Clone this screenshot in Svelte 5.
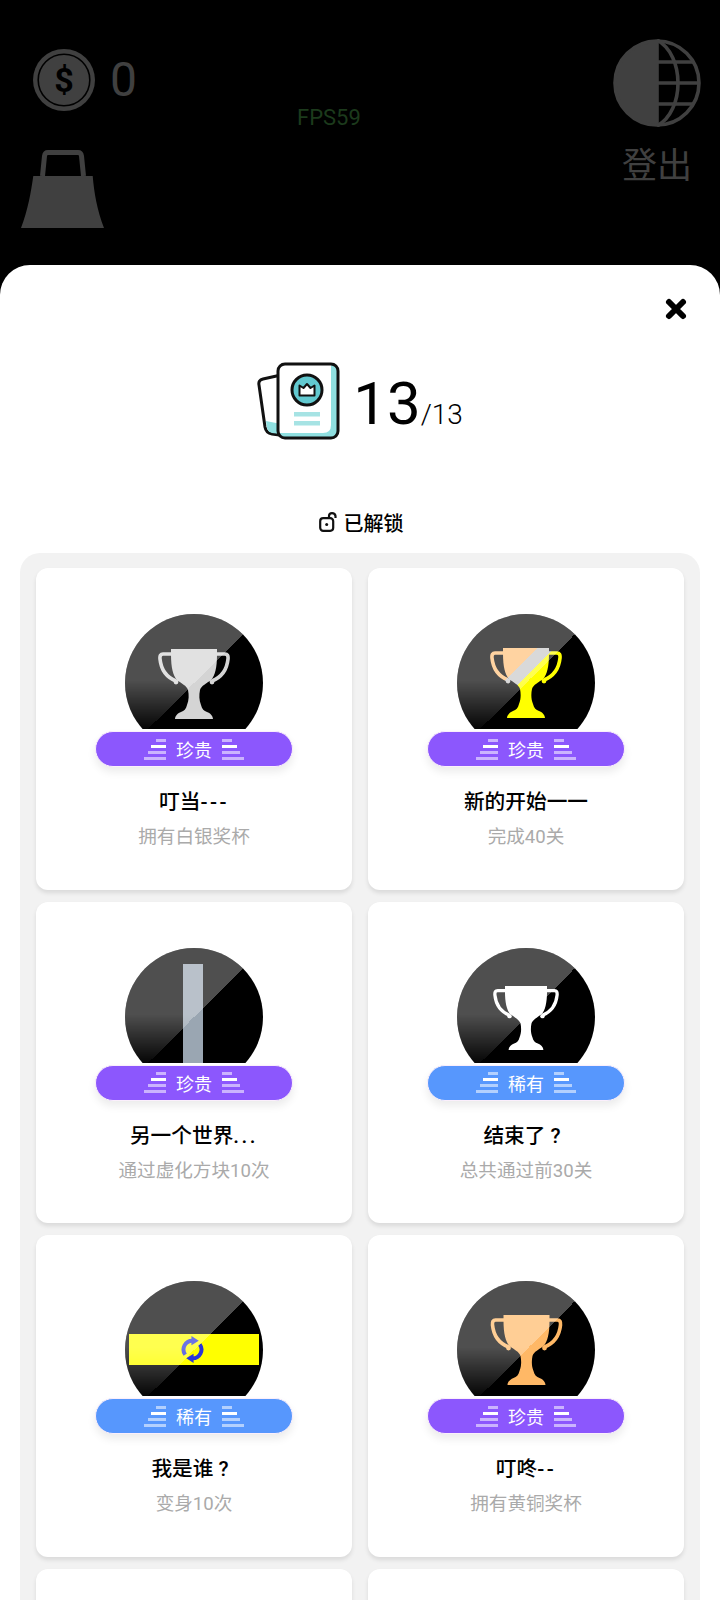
<script>
  const cards = [
    { art: 'silver', tier: 'epic', title: '叮当', tail: '---', sub: '拥有白银奖杯' },
    { art: 'mixed', tier: 'epic', title: '新的开始一一', sub: '完成40关' },
    { art: 'bar', tier: 'epic', title: '另一个世界', tail: '...', sub: '通过虚化方块10次' },
    { art: 'white', tier: 'rare', title: '结束了', tail: '?', sub: '总共通过前30关' },
    { art: 'swap', tier: 'rare', title: '我是谁', tail: '?', sub: '变身10次' },
    { art: 'bronze', tier: 'epic', title: '叮咚', tail: '--', sub: '拥有黄铜奖杯' },
    {},
    {}
  ];
  const tierName = { epic: '珍贵', rare: '稀有' };
</script>

{#snippet trophy(fill, w, h)}
  <svg class="trophy" width={w} height={h} viewBox="0 0 72 70">
    <defs>
      <linearGradient id="tri" gradientUnits="userSpaceOnUse" x1="0" y1="0" x2="72" y2="72">
        <stop offset="0.33" stop-color="#ffbf78" />
        <stop offset="0.33" stop-color="#c8c8c8" />
        <stop offset="0.45" stop-color="#c8c8c8" />
        <stop offset="0.45" stop-color="#ffff00" />
      </linearGradient>
    </defs>
    <path d="M14 5H5Q1.500 5 2 10C3 20 8 28 18 32" fill="none" stroke={fill} stroke-width="3.600" />
    <path d="M58 5H67Q70.500 5 70 10C69 20 64 28 54 32" fill="none" stroke={fill} stroke-width="3.600" />
    <path
      d="M13 0H59V6C59 18 57 27 53 31C49 34 43 37 42 41C41 46 41 51 43 56C44 60 46 62 49 63C52 64 55 67 55 70H17C17 67 20 64 23 63C26 62 28 60 29 56C31 51 31 46 30 41C29 37 23 34 19 31C15 27 13 18 13 6Z"
      fill={fill}
    />
    <circle cx="18" cy="33" r="2.400" fill={fill} />
    <circle cx="54" cy="33" r="2.400" fill={fill} />
  </svg>
{/snippet}

{#snippet stack(side)}
  <span class="stack {side}">
    <i class="s1"></i><i class="s2"></i><i class="s3"></i><i class="s4"></i>
  </span>
{/snippet}

<div class="screen">
  <header class="top">
    <div class="left">
      <div class="coins">
        <svg width="62" height="62" viewBox="0 0 62 62">
          <circle cx="31" cy="31" r="31" fill="#404040" />
          <circle cx="31" cy="31" r="25.800" fill="none" stroke="#000" stroke-width="1.600" />
          <text x="31" y="43" text-anchor="middle" class="dollar">$</text>
        </svg>
        <span class="count">0</span>
      </div>
      <svg class="weight" width="83" height="78" viewBox="0 0 83 78">
        <path d="M21.500 26L23.500 6Q24 2.500 27 2.500H57Q60 2.500 60.500 6L62.500 26" fill="none" stroke="#404040" stroke-width="5" />
        <path d="M12.300 26H71.700C73 42 76 60 83 78H0C7 60 10 42 12.300 26Z" fill="#404040" />
      </svg>
    </div>
    <div class="right">
      <svg width="88" height="88" viewBox="0 0 88 88">
        <path d="M44 1A43 43 0 0 0 44 87Z" fill="#404040" />
        <g fill="none" stroke="#404040" stroke-width="3.600">
          <circle cx="44" cy="44" r="42" />
          <path d="M44 1V87" />
          <path d="M44 1C72 16 72 72 44 87" />
          <path d="M44 23H80M44 44H87M44 65H80" />
        </g>
      </svg>
      <span class="logout">登出</span>
    </div>
    <span class="fps">FPS59</span>
  </header>

  <main class="panel">
    <div class="close-row">
      <svg width="24" height="24" viewBox="0 0 24 24">
        <path d="M5 5L19 19M19 5L5 19" stroke="#000" stroke-width="6" stroke-linecap="round" />
      </svg>
    </div>

    <div class="score">
      <svg width="84" height="80" viewBox="0 0 84 80">
        <path d="M24 14L6 18Q1 19 2 24L8 66Q9 72 15 73L30 75Z" fill="#fff" stroke="#111" stroke-width="3" stroke-linejoin="round" />
        <path d="M9 60L10 67Q11 71 15 72L24 73V63Z" fill="#8fdfe0" />
        <rect x="21" y="3" width="60" height="74" rx="7" fill="#fff" />
        <path d="M74 4H75Q80 4 80 9V71Q80 76 75 76H28Q23 76 22 72H66Q74 72 74 64Z" fill="#8fdfe0" />
        <rect x="21" y="3" width="60" height="74" rx="7" fill="none" stroke="#111" stroke-width="3" />
        <circle cx="50" cy="29" r="15" fill="#62c9d0" stroke="#111" stroke-width="3" />
        <path d="M42.500 24.500L46.500 27L50 23L53.500 27L57.500 24.500V34.500H42.500Z" fill="#fff" stroke="#111" stroke-width="2" stroke-linejoin="round" />
        <rect x="37" y="51" width="26" height="4.500" fill="#a6e3e4" />
        <rect x="37" y="60" width="26" height="4.500" fill="#a6e3e4" />
      </svg>
      <div class="score-text"><b>13</b><small>/13</small></div>
    </div>

    <div class="unlocked">
      <svg width="18" height="20" viewBox="0 0 18 20">
        <rect x="1.200" y="6.200" width="13" height="12.600" rx="3" fill="none" stroke="#111" stroke-width="2.200" />
        <path d="M10 6V4Q10 1.200 13 1.200Q16 1.200 16.500 4V6" fill="none" stroke="#111" stroke-width="2.200" />
        <circle cx="7.700" cy="12.500" r="1.500" fill="#111" />
      </svg>
      <span>已解锁</span>
    </div>

    <section class="grid">
      {#each cards as c}
        <article class="card">
          {#if c.art}
            <div class="disc">
              <div class="round">
                <div class="art {c.art}">
                  {#if c.art === 'silver'}
                    {@render trophy('#d4d4d4', 72, 70)}
                  {:else if c.art === 'mixed'}
                    {@render trophy('url(#tri)', 72, 70)}
                  {:else if c.art === 'white'}
                    {@render trophy('#ffffff', 66, 64)}
                  {:else if c.art === 'bronze'}
                    {@render trophy('#ffb866', 73, 70)}
                  {:else if c.art === 'bar'}
                    <span class="beam"></span>
                  {:else}
                    <span class="strip">
                      <svg class="sync" width="25" height="27" viewBox="0 0 24 26">
                        <g fill="none" stroke="#2a35d8" stroke-width="3.800">
                          <path d="M5 18A8.500 8.500 0 0 1 12 4.500" />
                          <path d="M19 8A8.500 8.500 0 0 1 12 21.500" />
                        </g>
                        <path d="M11 0L18 4.500L11 9Z" fill="#2a35d8" />
                        <path d="M13 17L6 21.500L13 26Z" fill="#2a35d8" />
                      </svg>
                    </span>
                  {/if}
                </div>
                <div class="sheen"></div>
              </div>
            </div>
            <div class="badge {c.tier}">
              {@render stack('l')}
              <span>{tierName[c.tier]}</span>
              {@render stack('r')}
            </div>
            <h3>{c.title}{#if c.tail}<span class="tail" class:q={c.tail === '?'}>{c.tail}</span>{/if}</h3>
            <p>{c.sub}</p>
          {/if}
        </article>
      {/each}
    </section>
  </main>
</div>

<style>
  :global(body) {
    margin: 0;
    background: #000;
  }
  .screen {
    width: 720px;
    height: 1600px;
    overflow: hidden;
    background: #000;
    font-family: Roboto, "Noto Sans CJK SC", sans-serif;
    position: relative;
  }
  .top {
    height: 265px;
    box-sizing: border-box;
    padding: 39px 19px 0 21px;
    display: flex;
    justify-content: space-between;
    align-items: flex-start;
  }
  .left {
    display: flex;
    flex-direction: column;
    gap: 39px;
    padding-top: 10px;
  }
  .coins {
    display: flex;
    align-items: center;
    gap: 15px;
    padding-left: 12px;
  }
  .dollar {
    font: 700 34px Roboto, sans-serif;
    fill: #000;
  }
  .count {
    font-size: 48px;
    font-weight: 400;
    color: #404040;
    line-height: 62px;
  }
  .weight {
    display: block;
  }
  .right {
    display: flex;
    flex-direction: column;
    align-items: center;
    gap: 20px;
  }
  .logout {
    font-size: 35px;
    line-height: 40px;
    color: #404040;
  }
  .fps {
    position: absolute;
    left: 297px;
    top: 105px;
    font-size: 22px;
    line-height: 26px;
    color: #1c3a1c;
  }
  .panel {
    background: #fff;
    border-radius: 30px 30px 0 0;
    padding-top: 32px;
  }
  .close-row {
    display: flex;
    justify-content: flex-end;
    padding-right: 32px;
    height: 24px;
  }
  .score {
    margin-top: 40px;
    display: flex;
    justify-content: center;
    align-items: center;
    gap: 12px;
    height: 80px;
  }
  .score-text {
    color: #000;
    white-space: nowrap;
    padding-top: 5px;
  }
  .score-text b {
    font-size: 60px;
    font-weight: 400;
  }
  .score-text small {
    font-size: 28px;
    font-weight: 300;
  }
  .unlocked {
    margin-top: 67px;
    height: 28px;
    padding-left: 2px;
    display: flex;
    justify-content: center;
    align-items: center;
    gap: 7px;
    font-size: 20px;
    font-weight: 500;
    color: #000;
  }
  .grid {
    margin: 17px 20px 0;
    padding: 15px 16px;
    background: #f2f2f2;
    border-radius: 20px;
    display: grid;
    grid-template-columns: 316px 316px;
    gap: 12px 16px;
  }
  .card {
    height: 321.500px;
    box-sizing: border-box;
    padding-top: 46px;
    background: #fff;
    border-radius: 12px;
    box-shadow: 0 3px 4px rgba(0, 0, 0, 0.1);
    display: flex;
    flex-direction: column;
    align-items: center;
  }
  .disc {
    width: 138px;
    height: 115px;
    overflow: hidden;
  }
  .round {
    width: 138px;
    height: 138px;
    border-radius: 50%;
    background: #000;
    position: relative;
    overflow: hidden;
  }
  .art {
    position: absolute;
    inset: 0;
    display: flex;
    justify-content: center;
    align-items: flex-start;
  }
  .silver {
    padding-top: 35px;
  }
  .mixed {
    padding-top: 34px;
  }
  .white {
    padding-top: 38px;
  }
  .bronze {
    padding-top: 34px;
  }
  .trophy {
    display: block;
  }
  .beam {
    width: 20px;
    height: 116px;
    margin: 16px 2px 0 0;
    background: #9aa6b2;
  }
  .strip {
    width: 130px;
    height: 31px;
    margin-top: 53px;
    background: #ffff00;
    display: flex;
    justify-content: center;
    align-items: center;
  }
  .sync {
    margin-right: 3px;
  }
  .sheen {
    position: absolute;
    inset: 0;
    background: linear-gradient(135deg, rgba(255, 255, 255, 0.31) 50%, transparent 50%);
    -webkit-mask-image: linear-gradient(180deg, #000 48%, transparent 86%);
    mask-image: linear-gradient(180deg, #000 48%, transparent 86%);
  }
  .badge {
    margin-top: 2px;
    width: 198px;
    height: 36px;
    box-sizing: border-box;
    border: 1px solid #fbeffc;
    border-radius: 18px;
    box-shadow: 0 5px 8px rgba(0, 0, 0, 0.08);
    display: flex;
    justify-content: center;
    align-items: center;
    gap: 10px;
    color: #fff;
    font-size: 18px;
  }
  .epic {
    background: #8c57fd;
  }
  .rare {
    background: #5797fd;
  }
  .stack {
    width: 22px;
    display: flex;
    flex-direction: column;
    gap: 3px;
  }
  .stack.l {
    align-items: flex-end;
  }
  .stack.r {
    align-items: flex-start;
  }
  .stack i {
    display: block;
    height: 3px;
    background: rgba(255, 255, 255, 0.55);
  }
  .stack .s1 {
    width: 10px;
  }
  .stack .s2 {
    width: 15px;
    background: #fff;
  }
  .stack .s3 {
    width: 18px;
  }
  .stack .s4 {
    width: 22px;
  }
  h3 {
    margin: 21px 0 0;
    font-size: 20.700px;
    line-height: 28px;
    font-weight: 500;
    color: #000;
  }
  .tail {
    letter-spacing: 2.500px;
  }
  .tail.q {
    padding: 0 5.500px 0 5px;
  }
  p {
    margin: 8px 0 0;
    font-size: 18.600px;
    line-height: 26px;
    color: #aaa;
  }
</style>
